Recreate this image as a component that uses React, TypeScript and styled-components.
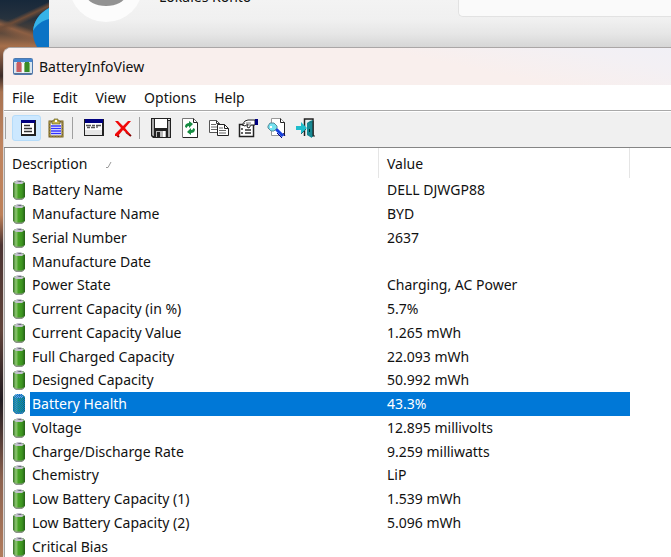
import React from "react";
import styled, { createGlobalStyle } from "styled-components";

const GlobalStyle = createGlobalStyle`
  * { box-sizing: border-box; }
  html, body, #root { height: 100%; }
  body {
    margin: 0;
    overflow: hidden;
    font-family: "Noto Sans", "Open Sans", sans-serif;
    font-size: 14px;
    color: #111;
  }
`;

const Desktop = styled.div`
  display: flex;
  flex-direction: column;
  height: 100%;
  background:
    linear-gradient(155deg, transparent 0 22px, #6d4c38 26px, transparent 31px) 0 0 / 50px 70px no-repeat,
    linear-gradient(200deg, transparent 0 34px, #8d5f43 40px, transparent 48px) 0 0 / 50px 70px no-repeat,
    linear-gradient(180deg, #17283a 0, #26323e 18px, #4c4038 30px, #a66f4a 46px, #6e4b3a 62px, #3b2c29 76px,
      #a87351 92px, #c08560 150px, #bd8059 215px, #4b3433 245px, #61443b 330px, #211b20 400px, #8d6350 480px, #b17c5d 557px);
`;

const Backdrop = styled.div`
  display: flex;
  flex: none;
  height: 47px;
`;

const DesktopEdge = styled.div`
  display: flex;
  justify-content: flex-end;
  align-items: flex-end;
  width: 49px;
`;

const SettingsWindow = styled.div`
  display: flex;
  flex: 1;
  align-items: flex-start;
  background: linear-gradient(#f3f3f3 0, #f0f0f0 20px, #e6e6e6 34px, #d6d6d6 47px);
`;

const Avatar = styled.svg`
  display: block;
  margin-left: 22px;
`;

const AccountType = styled.div`
  flex: 1;
  margin: -13px 0 0 18px;
  line-height: 20px;
`;

const SettingsCard = styled.div`
  width: 213px;
  height: 17px;
  background: #fafafa;
  border: solid #e2e2e2;
  border-width: 0 0 1px 1px;
  border-bottom-left-radius: 5px;
`;

const Window = styled.main`
  display: flex;
  flex: 1;
  flex-direction: column;
  min-height: 0;
  margin-left: 3px;
  overflow: hidden;
  border-top: 1px solid #aaa6a6;
  border-left: 1px solid #d9d4d2;
  border-top-left-radius: 8px;
  background: #fff;
`;

const TitleBar = styled.header`
  display: flex;
  flex: none;
  align-items: center;
  gap: 6px;
  height: 37px;
  padding-left: 9px;
  background: linear-gradient(12deg, #f9efed 65%, #f3f0f4 88%, #f1f0f6);
`;

const Title = styled.h1`
  margin: 0;
  font-size: 14px;
  font-weight: 400;
`;

const MenuBar = styled.nav`
  display: flex;
  flex: none;
  gap: 2px;
  height: 25px;
`;

const MenuButton = styled.button`
  padding: 0 8px;
  border: 0;
  background: none;
  color: inherit;
  font: inherit;
  &:hover { background: #e5f3ff; }
`;

const ToolBar = styled.div`
  display: flex;
  flex: none;
  align-items: center;
  height: 37px;
  padding-bottom: 3px;
  border-top: 1px solid #a9a9a9;
  box-shadow: inset 0 1px #fff;
  background: #f0f0f0;
`;

const Separator = styled.span`
  width: 1px;
  height: 22px;
  margin: 0 6px 0 2px;
  background: #a0a0a0;
  &:first-child { margin-left: 1px; }
`;

const ToolButton = styled.button<{ $active?: boolean }>`
  display: grid;
  place-items: center;
  width: 29px;
  height: 26px;
  padding: 0;
  border: 1px solid ${(p) => (p.$active ? "#b5dcfa" : "transparent")};
  border-radius: 3px;
  background: ${(p) => (p.$active ? "#cce8ff" : "none")};
  svg { display: block; }
`;

const ListPane = styled.section`
  flex: 1;
  min-height: 0;
  overflow: hidden;
  border-top: 1px solid #858585;
  box-shadow: inset 1px 0 #a0a0a0;
`;

const Table = styled.table`
  width: 100%;
  table-layout: fixed;
  border-collapse: separate;
  border-spacing: 0;
`;

const Column = styled.col<{ $width?: number }>`
  width: ${(p) => (p.$width ? `${p.$width}px` : "auto")};
`;

const HeaderCell = styled.th`
  height: 30px;
  padding: 0 8px;
  border-right: 1px solid #e5e5e5;
  font-weight: 400;
  text-align: left;
  &:last-child { border-right: 0; }
`;

const SortMark = styled.svg`
  margin-left: 19px;
`;

const Row = styled.tr<{ $selected?: boolean }>`
  height: 24px;
  line-height: 22px;
  color: ${(p) => (p.$selected ? "#fff" : "inherit")};
  --fill: ${(p) => (p.$selected ? "#0078d7" : "transparent")};
  &:nth-child(4n) { height: 23px; }
`;

const NameCell = styled.td`
  height: inherit;
  padding: 0 0 0 9px;
`;

const NameContent = styled.div`
  display: flex;
  align-items: center;
  gap: 5px;
  height: 100%;
`;

const Label = styled.span`
  flex: 1;
  align-self: stretch;
  padding: 1px 0 0 2px;
  background: var(--fill);
  white-space: nowrap;
`;

const ValueCell = styled.td`
  padding: 0 8px;
  background: var(--fill);
  white-space: nowrap;
`;

const BatteryIcon = ({ selected }: { selected?: boolean }) => (
  <svg width="12" height="20" viewBox="0 0 12 20" aria-hidden="true">
    <defs>
      <linearGradient id="cell">
        <stop offset="0" stopColor="#356f24" />
        <stop offset=".25" stopColor="#8fc873" />
        <stop offset=".45" stopColor="#48a326" />
        <stop offset=".75" stopColor="#3c9420" />
        <stop offset="1" stopColor="#265f18" />
      </linearGradient>
      <pattern id="dither" width="2" height="2" patternUnits="userSpaceOnUse">
        <path d="M0 0h1v1H0zM1 1h1v1H1z" fill="#0078d7" />
      </pattern>
    </defs>
    <path d="M0 3 2 1h8l2 2v14l-2 2H2l-2-2z" fill="url(#cell)" />
    <path d="M1 2.500 3 1l1-1h4l1 1 2 1.500-2 1.500H3z" fill="#c3c1cd" />
    <path d="M4 1h4l1 1H6z" fill="#6b6878" />
    <path d="M1 17.500 3 18.500h6l2-1v1L9 20H3l-2-1.500z" fill="#8b9388" />
    {selected && <path d="M0 3 3 0h6l3 3v14l-3 3H3l-3-3z" fill="#0078d7" opacity=".35" />}
    {selected && <path d="M0 3 3 0h6l3 3v14l-3 3H3l-3-3z" fill="url(#dither)" />}
  </svg>
);

const AppIcon = () => (
  <svg width="20" height="17" viewBox="0 0 20 17" aria-hidden="true">
    <rect x=".5" y=".5" width="19" height="16" rx="1" fill="#d8e5ef" stroke="#4d78ad" />
    <path d="M1 1h18v3H1z" fill="#4686cf" />
    <path d="M1 15h18v1H1z" fill="#5d7294" />
    <path d="M3 5h6v9H3z" fill="#d99a9a" /><path d="M4 4h4v10H4z" fill="#c95d62" />
    <path d="M9 5h2v10H9z" fill="#f8f9fa" />
    <path d="M11 5h6v9h-6z" fill="#7fb970" /><path d="M12 4h4v10h-4z" fill="#398b26" />
  </svg>
);

const Icon = ({ children }: { children: React.ReactNode }) => (
  <svg width="20" height="20" viewBox="0 0 20 20" aria-hidden="true">{children}</svg>
);

const DetailsIcon = () => (
  <Icon>
    <path d="M4 2h15v16H4z" fill="#222" /><path d="M4 2h14v3H4z" fill="#000080" />
    <path d="M5 5h12v11H5z" fill="#fff" />
    <path d="M7 7.500h6M7 10.500h8M7 13.500h8" stroke="#333" strokeWidth="1.300" />
  </Icon>
);
const ClipboardIcon = () => (
  <Icon>
    <path d="M3.500 3.500h13v15h-13z" fill="#e9e9ff" stroke="#77622d" strokeWidth="2" />
    <path d="M3.500 3.500h13v15h-13z" fill="none" stroke="#b09b42" strokeWidth="2" strokeDasharray="1 2" />
    <path d="M5 6h10v11H5z" fill="#fff" />
    <path d="M5 8h10M5 10.500h10M5 13h10M5 15.500h10" stroke="#3030ff" strokeWidth="1.500" />
    <path d="M6 6V3h2V1h4v2h2v3z" fill="#c9b64a" stroke="#66622d" strokeWidth=".7" />
    <path d="M9 2h2v2H9z" fill="#fff" />
  </Icon>
);
const OptionsIcon = () => (
  <Icon>
    <path d="M0 1h20v17H0z" fill="#222" /><path d="M1 1h18v4H1z" fill="#000080" />
    <path d="M1 5h17v12H1z" fill="#fff" /><path d="M1 12h17v5H1z" fill="#e6e6e6" />
    <path d="M2 7.500h5M8 7.500h3M12 7.500h5M3 9.500h3M7 9.500h4M13 7v3" stroke="#555" strokeWidth="1.300" />
  </Icon>
);
const DeleteIcon = () => (
  <Icon>
    <path d="M13 14l5 4M4 17l2 2" stroke="#800000" strokeWidth="2" />
    <path d="M2 3h3l5 5 5-5h3l-6 7 5 6-1 1-6-5-5 6H2v-2l6-6z" fill="#f00808" />
  </Icon>
);
const SaveIcon = () => (
  <Icon>
    <path d="M0 0h20v20H2l-2-2z" fill="#222" /><path d="M1 1h2v17H2l-1-1zM17 3h2v16h-2z" fill="#aaa" />
    <path d="M4 1h12v9H4z" fill="#fff" /><path d="M17 1h2v1h-2z" fill="#eee" />
    <path d="M5 13h10v6H5z" fill="#bbb" /><path d="M6 14h3v5H6z" fill="#222" /><path d="M12 13h2v6h-2z" fill="#fff" />
  </Icon>
);
const RefreshIcon = () => (
  <Icon>
    <path d="M2.500.5h11l4 4v15h-15z" fill="#fff" stroke="#777" />
    <path d="M13.500.5v4h4M17.500 5v14.500H3" fill="none" stroke="#222" />
    <path d="M5 9c0-3 2-4 4-4V3l4 3-4 4V8C7 8 7 9 7 10z" fill="#168c42" />
    <path d="M15 11c0 3-2 4-4 4v2l-4-3 4-4v2c2 0 2-1 2-2z" fill="#168c42" />
  </Icon>
);
const CopyIcon = () => (
  <Icon>
    <path d="M.5 2.500h7l3 3v9H.5z" fill="#fff" stroke="#555" /><path d="M7.500 2.500v3h3" fill="none" stroke="#333" />
    <path d="M2 6.500h5M2 9h6M2 11.500h6" stroke="#666" />
    <path d="M8.500 6.500h7l4 4v7h-11z" fill="#fff" stroke="#222" /><path d="M15.500 6.500v4h4" fill="none" stroke="#222" />
    <path d="M10 10h4M10 12.500h7M10 15h7" stroke="#666" />
  </Icon>
);
const PropertiesIcon = () => (
  <Icon>
    <path d="M1.500 6.500h14v12h-14z" fill="#fff" stroke="#222" strokeWidth="1.500" />
    <path d="M3 11h2M3 15h2M7 12h6M7 15h6" stroke="#333" strokeWidth="1.700" />
    <path d="m4 7 3-4 3-1h7v5h-4l-2 3-2-1 1-3-3 2z" fill="#fff" stroke="#222" />
    <path d="M8 5h5M9 7h4M5 7l2-2" stroke="#777" /><path d="M17 1h3v6h-3z" fill="#000080" />
  </Icon>
);
const FindIcon = () => (
  <Icon>
    <path d="M4.500.5h9l4 4v13h-13z" fill="#fff" stroke="#999" /><path d="M13.500.5v4h4v13" fill="none" stroke="#222" />
    <path d="m9 11 7 7" stroke="#123fdf" strokeWidth="3" /><path d="m10 15 5 5M16 15l2 3" stroke="#000080" />
    <path d="M3 5h4l3 3v2l-3 3H4l-3-3V8z" fill="#74e1ef" stroke="#588b9a" /><path d="M3 8h2v2H3z" fill="#fff" />
  </Icon>
);
const ExitIcon = () => (
  <Icon>
    <path d="M8.500 18V1h8.500v17" fill="#e8eeee" stroke="#222" strokeWidth="1.500" />
    <path d="M17 2v17h-2l-4-3V5l3-2z" fill="#147f87" /><path d="M11 5v12l5 3V5z" fill="#188a94" />
    <path d="M17 3v15h2" fill="none" stroke="#222" /><path d="M13 11h1v3h-1z" fill="#033" />
    <path d="M0 8h5V4l6 6-6 6v-4H0z" fill="#20bdcc" /><path d="m5 16 5-5" stroke="#176c76" />
  </Icon>
);

const menus = ["File", "Edit", "View", "Options", "Help"];

const toolGroups = [
  [{ name: "Details", Glyph: DetailsIcon }, { name: "Battery log", Glyph: ClipboardIcon }],
  [{ name: "Advanced options", Glyph: OptionsIcon }, { name: "Delete", Glyph: DeleteIcon }],
  [
    { name: "Save", Glyph: SaveIcon },
    { name: "Refresh", Glyph: RefreshIcon },
    { name: "Copy", Glyph: CopyIcon },
    { name: "Properties", Glyph: PropertiesIcon },
    { name: "Find", Glyph: FindIcon },
    { name: "Exit", Glyph: ExitIcon },
  ],
];

const rows = [
  ["Battery Name", "DELL DJWGP88"],
  ["Manufacture Name", "BYD"],
  ["Serial Number", "2637"],
  ["Manufacture Date", ""],
  ["Power State", "Charging, AC Power"],
  ["Current Capacity (in %)", "5.7%"],
  ["Current Capacity Value", "1.265 mWh"],
  ["Full Charged Capacity", "22.093 mWh"],
  ["Designed Capacity", "50.992 mWh"],
  ["Battery Health", "43.3%"],
  ["Voltage", "12.895 millivolts"],
  ["Charge/Discharge Rate", "9.259 milliwatts"],
  ["Chemistry", "LiP"],
  ["Low Battery Capacity (1)", "1.539 mWh"],
  ["Low Battery Capacity (2)", "5.096 mWh"],
  ["Critical Bias", ""],
];

export default function App() {
  return (
    <Desktop>
      <GlobalStyle />
      <Backdrop>
        <DesktopEdge>
          <svg width="16" height="39" viewBox="0 0 16 39" aria-hidden="true">
            <path d="M16 0C7 5 0 13 0 25c0 6 2 10 4 14h12z" fill="#0b73c5" />
            <path d="M16 0C7 5 1 12 0 23c4-7 9-10 16-12z" fill="#36b3e7" />
          </svg>
        </DesktopEdge>
        <SettingsWindow>
          <Avatar width="70" height="22" viewBox="0 0 70 22" aria-hidden="true">
            <circle cx="35" cy="-15" r="37" fill="#fcfcfc" />
            <ellipse cx="35" cy="-4" rx="19" ry="10" fill="#929292" />
          </Avatar>
          <AccountType>Lokales Konto</AccountType>
          <SettingsCard />
        </SettingsWindow>
      </Backdrop>
      <Window>
        <TitleBar>
          <AppIcon />
          <Title>BatteryInfoView</Title>
        </TitleBar>
        <MenuBar>
          {menus.map((m) => <MenuButton key={m}>{m}</MenuButton>)}
        </MenuBar>
        <ToolBar role="toolbar">
          {toolGroups.map((group, g) => (
            <React.Fragment key={g}>
              <Separator />
              {group.map(({ name, Glyph }, i) => (
                <ToolButton key={name} aria-label={name} $active={g === 0 && i === 0}>
                  <Glyph />
                </ToolButton>
              ))}
            </React.Fragment>
          ))}
        </ToolBar>
        <ListPane>
          <Table>
            <colgroup>
              <Column $width={375} />
              <Column $width={251} />
              <Column />
            </colgroup>
            <thead>
              <tr>
                <HeaderCell>
                  Description
                  <SortMark width="7" height="8" viewBox="0 0 7 8" aria-hidden="true">
                    <path d="M0 6.500h2L5 1" fill="none" stroke="#999" />
                  </SortMark>
                </HeaderCell>
                <HeaderCell>Value</HeaderCell>
                <HeaderCell aria-hidden="true" />
              </tr>
            </thead>
            <tbody>
              {rows.map(([name, value]) => {
                const selected = name === "Battery Health";
                return (
                  <Row key={name} $selected={selected} aria-selected={selected}>
                    <NameCell>
                      <NameContent>
                        <BatteryIcon selected={selected} />
                        <Label>{name}</Label>
                      </NameContent>
                    </NameCell>
                    <ValueCell>{value}</ValueCell>
                    <td />
                  </Row>
                );
              })}
            </tbody>
          </Table>
        </ListPane>
      </Window>
    </Desktop>
  );
}
